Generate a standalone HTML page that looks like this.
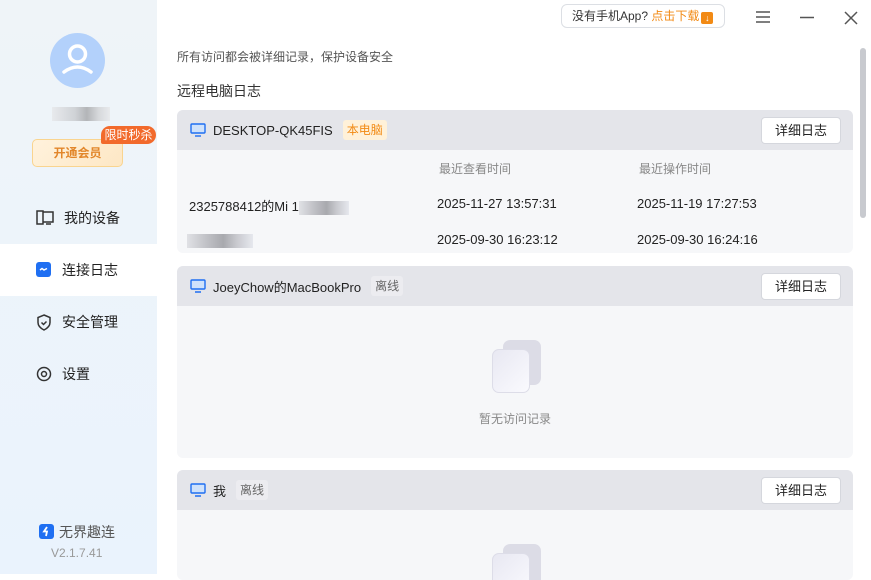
<!DOCTYPE html>
<html><head><meta charset="utf-8"><style>
*{margin:0;padding:0;box-sizing:border-box}
body{width:871px;height:574px;overflow:hidden;background:#fff;font-family:"Liberation Sans","Noto Sans CJK SC",sans-serif;font-size:13px;color:#222;position:relative}
.side{position:absolute;left:0;top:0;width:157px;height:574px;background:linear-gradient(#eff4f8,#eaf3fd)}
.abs{position:absolute}
.nav{position:absolute;left:0;width:157px;height:52px;display:flex;align-items:center;padding-left:36px;font-size:14px;color:#222}
.nav svg{margin-right:10px}
.card{position:absolute;left:177px;width:676px;background:#f6f7f9;border-radius:6px;overflow:hidden}
.hd{height:40px;background:#e4e5ea;display:flex;align-items:center;padding-left:13px;font-size:13px;color:#222}
.btn{position:absolute;right:12px;top:7px;width:80px;height:27px;background:#fff;border:1px solid #d5d7dd;border-radius:4px;font-size:13px;text-align:center;line-height:25px;color:#222}
.tag{margin-left:10px;padding:0 4px;height:20px;line-height:20px;font-size:12px;border-radius:3px}
.blur{display:inline-block;height:14px;vertical-align:middle;background:linear-gradient(90deg,#e0e1e5,#c0c1c6 30%,#a8a9ae 55%,#c8c9ce 75%,#e6e8ee)}
</style></head><body>
<div class="side">
  <div class="abs" style="left:50px;top:33px;width:55px;height:55px;border-radius:50%;background:#b3d1fb"></div>
  <svg class="abs" style="left:50px;top:33px" width="55" height="55"><circle cx="27.5" cy="21" r="8" fill="none" stroke="#fff" stroke-width="3.5"/><path d="M14 39 Q27.5 29 41 39" fill="none" stroke="#fff" stroke-width="3.5" stroke-linecap="round"/></svg>
  <div class="abs" style="left:52px;top:107px;width:58px;height:14px;background:linear-gradient(90deg,#e8eaed,#cfd2d6 40%,#b3b5b8 60%,#d6d8db 80%,#e8eaed)"></div>
  <div class="abs" style="left:32px;top:139px;width:91px;height:28px;border:1px solid #f9d48f;border-radius:5px;background:linear-gradient(135deg,#fff2dc,#fde7c5);color:#e2862a;font-size:12px;font-weight:bold;text-align:center;line-height:26px">开通会员</div>
  <div class="abs" style="left:101px;top:126px;width:55px;height:18px;background:#f26a2c;border-radius:9px 9px 9px 2px;color:#fff;font-size:12px;text-align:center;line-height:18px">限时秒杀</div>
  <div class="nav" style="top:192px"><svg width="18" height="16"><rect x="1" y="1" width="6" height="13" fill="none" stroke="#333" stroke-width="1.5"/><path d="M7 2h10v10H7M10 14h5" fill="none" stroke="#333" stroke-width="1.5"/></svg>我的设备</div>
  <div class="nav" style="top:244px;background:#fff"><svg width="16" height="16"><rect width="15" height="15" rx="3" fill="#1f6ff2"/><path d="M4 8l2-1.5 2 1.5 3-1.5" stroke="#fff" stroke-width="1.5" fill="none"/></svg>连接日志</div>
  <div class="nav" style="top:296px"><svg width="16" height="17"><path d="M8 1l6 2.5v5c0 4-3 6-6 7.5C5 14.5 2 12.5 2 8.5v-5z" fill="none" stroke="#333" stroke-width="1.5"/><path d="M5.5 8.5l2 2 3-3" fill="none" stroke="#333" stroke-width="1.5"/></svg>安全管理</div>
  <div class="nav" style="top:348px"><svg width="16" height="16"><circle cx="8" cy="8" r="6.5" fill="none" stroke="#333" stroke-width="1.5"/><circle cx="8" cy="8" r="2.5" fill="none" stroke="#333" stroke-width="1.5"/></svg>设置</div>
  <svg class="abs" style="left:39px;top:524px" width="15" height="15"><rect width="15" height="15" rx="3" fill="#1f6ff2"/><path d="M8 3L5 7.5h3l-1 4.5" stroke="#fff" stroke-width="1.8" fill="none"/></svg>
  <div class="abs" style="left:59px;top:522px;font-size:14px;color:#555">无界趣连</div>
  <div class="abs" style="left:51px;top:546px;font-size:12px;color:#999">V2.1.7.41</div>
</div>

<div class="abs" style="left:561px;top:4px;width:164px;height:24px;border:1px solid #dcdfe4;border-radius:6px;font-size:12px;line-height:22px;padding-left:10px;color:#333">没有手机App? <span style="color:#f28a14">点击下载</span><span style="display:inline-block;width:12px;height:12px;background:#f28a14;border-radius:2px;vertical-align:-1px;margin-left:2px;color:#fff;font-size:9px;line-height:12px;text-align:center">↓</span></div>
<svg class="abs" style="left:755px;top:10px" width="16" height="14"><path d="M1 2h14M1 7h14M1 12h14" stroke="#555" stroke-width="1.5"/></svg>
<svg class="abs" style="left:799px;top:10px" width="16" height="14"><path d="M1 7.5h14" stroke="#555" stroke-width="1.5"/></svg>
<svg class="abs" style="left:843px;top:10px" width="16" height="16"><path d="M2 2l12 12M14 2L2 14" stroke="#555" stroke-width="1.5"/></svg>
<div class="abs" style="left:860px;top:48px;width:6px;height:170px;background:#c8cacf;border-radius:3px"></div>

<div class="abs" style="left:177px;top:48px;font-size:12px;color:#555">所有访问都会被详细记录，保护设备安全</div>
<div class="abs" style="left:177px;top:81px;font-size:14px;color:#333">远程电脑日志</div>

<div class="card" style="top:110px;height:143px">
  <div class="hd"><svg width="16" height="14" style="margin-right:7px"><rect x="1" y="1" width="14" height="9" rx="1" fill="#cfe2fb" stroke="#1f6ff2" stroke-width="1.4"/><path d="M5 13h6" stroke="#1f6ff2" stroke-width="1.4"/></svg>DESKTOP-QK45FIS<span class="tag" style="background:#fff1d9;color:#f28a14">本电脑</span></div>
  <div class="btn">详细日志</div>
  <div class="abs" style="left:262px;top:50px;font-size:12px;color:#888">最近查看时间</div>
  <div class="abs" style="left:462px;top:50px;font-size:12px;color:#888">最近操作时间</div>
  <div class="abs" style="left:12px;top:86px">2325788412的Mi 1<span class="blur" style="width:50px"></span></div>
  <div class="abs" style="left:260px;top:86px">2025-11-27 13:57:31</div>
  <div class="abs" style="left:460px;top:86px">2025-11-19 17:27:53</div>
  <div class="abs" style="left:10px;top:122px"><span class="blur" style="width:66px"></span></div>
  <div class="abs" style="left:260px;top:122px">2025-09-30 16:23:12</div>
  <div class="abs" style="left:460px;top:122px">2025-09-30 16:24:16</div>
</div>

<div class="card" style="top:266px;height:192px">
  <div class="hd"><svg width="16" height="14" style="margin-right:7px"><rect x="1" y="1" width="14" height="9" rx="1" fill="#cfe2fb" stroke="#1f6ff2" stroke-width="1.4"/><path d="M5 13h6" stroke="#1f6ff2" stroke-width="1.4"/></svg>JoeyChow的MacBookPro<span class="tag" style="background:#ececf0;color:#666">离线</span></div>
  <div class="btn">详细日志</div>
  <div class="abs" style="left:326px;top:74px;width:38px;height:45px;border-radius:7px;background:#dcdce6"></div>
  <div class="abs" style="left:315px;top:83px;width:38px;height:44px;border-radius:7px;background:linear-gradient(135deg,#e8e8f2,#fafafe);border:1px solid #dddde8"></div>
  <div class="abs" style="left:302px;top:144px;font-size:12px;color:#888">暂无访问记录</div>
</div>

<div class="card" style="top:470px;height:110px">
  <div class="hd"><svg width="16" height="14" style="margin-right:7px"><rect x="1" y="1" width="14" height="9" rx="1" fill="#cfe2fb" stroke="#1f6ff2" stroke-width="1.4"/><path d="M5 13h6" stroke="#1f6ff2" stroke-width="1.4"/></svg>我<span class="tag" style="background:#ececf0;color:#666">离线</span></div>
  <div class="btn">详细日志</div>
  <div class="abs" style="left:326px;top:74px;width:38px;height:45px;border-radius:7px;background:#dcdce6"></div>
  <div class="abs" style="left:315px;top:83px;width:38px;height:44px;border-radius:7px;background:linear-gradient(135deg,#e8e8f2,#fafafe);border:1px solid #dddde8"></div>
</div>
</body></html>
